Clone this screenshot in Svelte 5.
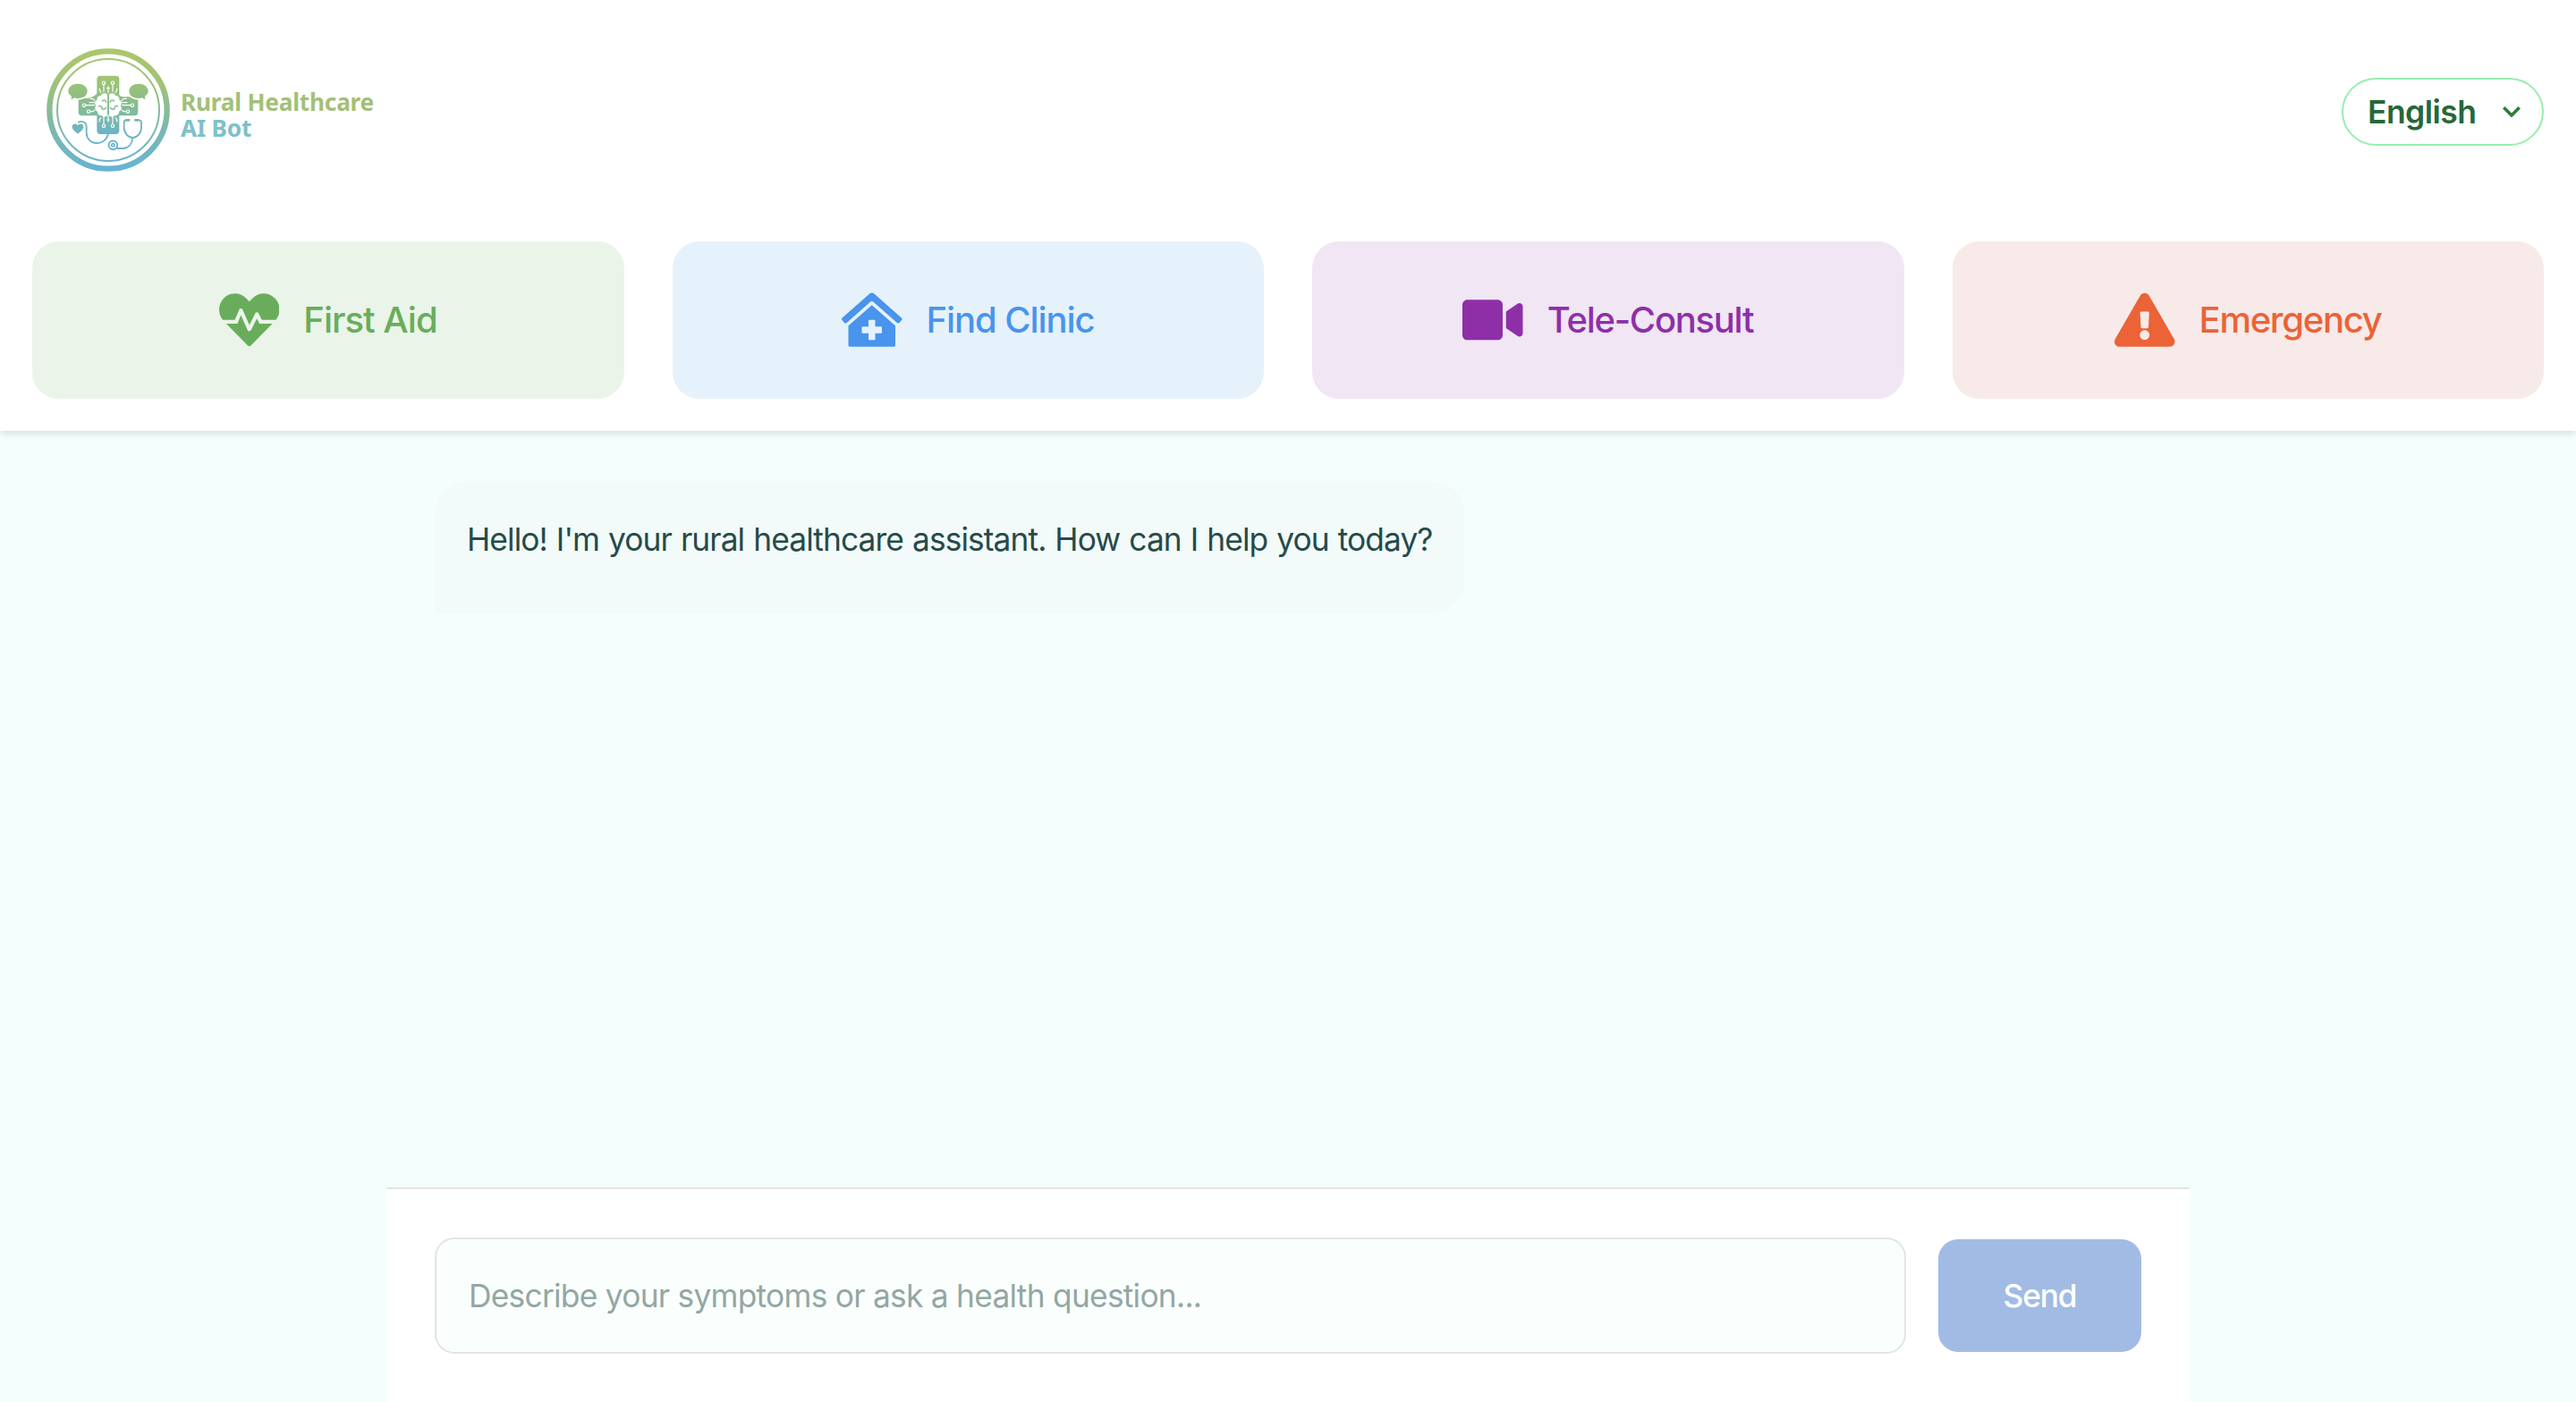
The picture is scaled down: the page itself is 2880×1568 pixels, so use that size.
<script>
  const actions = [
    { id: 'aid', label: 'First Aid', box: '0 0 512 512', path: 'M320.2 243.8l-49.7 99.4c-6 12.1-23.4 11.7-28.9-.6l-56.9-126.3-30 71.7H60.6l182.5 186.5c7.1 7.3 18.6 7.3 25.7 0L451.4 288H342.3l-22.1-44.2zM473.7 73.9l-2.4-2.5c-51.5-52.6-135.8-52.6-187.4 0L256 100l-27.9-28.5c-51.5-52.7-135.9-52.7-187.4 0l-2.4 2.4C-10.4 123.7-12.5 203 31 256h102.4l35.9-86.2c5.4-12.9 23.6-13.2 29.4-.4l58.2 129.3 49-97.9c5.9-11.8 22.7-11.8 28.6 0l27.6 55.2H481c43.5-53 41.4-132.3-7.3-182.1z' },
    { id: 'clinic', label: 'Find Clinic', box: '0 0 576 512', path: 'M288 115L69.47 307.71c-1.62 1.46-3.69 2.14-5.47 3.35V496a16 16 0 0 0 16 16h416a16 16 0 0 0 16-16V311.1c-1.7-1.16-3.72-1.82-5.26-3.2zm96 261a8 8 0 0 1-8 8h-56v56a8 8 0 0 1-8 8h-48a8 8 0 0 1-8-8v-56h-56a8 8 0 0 1-8-8v-48a8 8 0 0 1 8-8h56v-56a8 8 0 0 1 8-8h48a8 8 0 0 1 8 8v56h56a8 8 0 0 1 8 8zm186.69-139.72l-255.94-226a39.85 39.85 0 0 0-53.45 0l-256 226a16 16 0 0 0-1.21 22.6L25.5 282.7a16 16 0 0 0 22.6 1.21L277.42 81.63a16 16 0 0 1 21.17 0L527.91 283.9a16 16 0 0 0 22.6-1.21l21.4-23.82a16 16 0 0 0-1.22-22.59z' },
    { id: 'tele', label: 'Tele-Consult', box: '0 0 576 512', path: 'M336.2 64H47.8C21.4 64 0 85.4 0 111.8v288.4C0 426.6 21.4 448 47.8 448h288.4c26.4 0 47.8-21.4 47.8-47.8V111.8c0-26.4-21.4-47.8-47.8-47.8zm189.4 37.7L416 177.3v157.4l109.6 75.5c21.2 14.6 50.4-.3 50.4-25.8V127.5c0-25.4-29.1-40.4-50.4-25.8z' },
    { id: 'sos', label: 'Emergency', box: '0 0 576 512', path: 'M569.517 440.013C587.975 472.007 564.806 512 527.94 512H48.054c-36.937 0-59.999-40.055-41.577-71.987L246.423 23.985c18.467-32.009 64.72-31.951 83.154 0l239.94 416.028zM288 354c-25.405 0-46 20.595-46 46s20.595 46 46 46 46-20.595 46-46-20.595-46-46-46zm-43.673-165.346l7.418 136c.347 6.364 5.609 11.346 11.982 11.346h48.546c6.373 0 11.635-4.982 11.982-11.346l7.418-136c.375-6.874-5.098-12.654-11.982-12.654h-63.383c-6.884 0-12.356 5.78-11.981 12.654z' }
  ];
</script>

<div class="page">
  <header>
    <div class="top">
      <div class="brand">
        <svg class="logo" viewBox="33 39 420 420" fill="none" stroke="url(#inner)" stroke-linecap="round" stroke-linejoin="round">
          <defs>
            <linearGradient id="ring" gradientUnits="userSpaceOnUse" x1="0" y1="45" x2="0" y2="455">
              <stop offset="0" stop-color="#acc76b" />
              <stop offset=".3" stop-color="#9cc27a" />
              <stop offset=".6" stop-color="#7fb9a6" />
              <stop offset="1" stop-color="#66b3d6" />
            </linearGradient>
            <linearGradient id="inner" gradientUnits="userSpaceOnUse" x1="0" y1="134" x2="0" y2="380">
              <stop offset="0" stop-color="#a3c670" />
              <stop offset=".28" stop-color="#8fbe82" />
              <stop offset=".52" stop-color="#7ebaa0" />
              <stop offset=".78" stop-color="#6cb4c8" />
              <stop offset="1" stop-color="#68b2d2" />
            </linearGradient>
          </defs>
          <circle cx="243" cy="249" r="197" stroke="url(#ring)" stroke-width="19" />
          <circle cx="243" cy="249" r="171" stroke="url(#ring)" stroke-width="6" />
          <path fill="url(#inner)" stroke="none" d="M217 134h51q12 0 12 12v53q5 6 12 6h39q12 0 12 12v39q0 12-12 12h-51v50q0 12-12 12h-51q-12 0-12-12v-50h-50q-12 0-12-12v-39q0-6 6-8 38 4 56-15v-48q0-12 12-12z" />
          <g fill="url(#inner)" stroke="#fff" stroke-width="10" paint-order="stroke">
            <path d="M141 161c18 0 32 10 32 25s-14 24-32 24c-5 0-8 0-12-2-3 3-7 5-11 6 2-4 2-8 1-12-6-4-10-9-10-16 0-15 14-25 32-25z" />
            <path d="M345 161c-18 0-32 10-32 25s14 24 32 24c5 0 8 0 12-2 3 3 7 5 11 6-2-4-2-8-1-12 6-4 10-9 10-16 0-15-14-25-32-25z" />
          </g>
          <path fill="url(#inner)" stroke="none" d="M141 329c-12-10-19-16-19-24 0-11 14-13 19-4 5-9 19-7 19 4 0 8-7 14-19 24z" />
          <g fill="#fff" stroke="none">
            <path d="M240 197c-8-7-19-4-22 4-9 0-14 7-12 14-9 4-10 14-4 19-6 7-3 17 5 20-1 9 7 15 14 13 5 7 15 6 19 1z" />
            <path d="M246 197c8-7 19-4 22 4 9 0 14 7 12 14 9 4 10 14 4 19 6 7 3 17-5 20 1 9-7 15-14 13-5 7-15 6-19 1z" />
          </g>
          <g stroke="#fff" stroke-width="3.5">
            <circle cx="228" cy="158" r="5" /><circle cx="258" cy="158" r="5" />
            <path d="M228 164v23M258 164v23M243 170v22M214 177v6l5 7M272 177v6l-5 7M228 295v-24M258 295v-24M243 288v-22M214 288v-7l5-6M272 288v-7l-5-6M239 176h8M239 282h8" />
            <circle cx="228" cy="302" r="5" /><circle cx="258" cy="302" r="5" />
            <circle cx="162" cy="233" r="5" /><circle cx="177" cy="254" r="5" />
            <path d="M168 233h28M183 254h8l7-5M182 211h9l7 6M180 224h16" />
            <circle cx="324" cy="233" r="5" /><circle cx="309" cy="254" r="5" />
            <path d="M318 233h-28M303 254h-8l-7-5M304 211h-9l-7 6M306 224h-16" />
          </g>
          <g stroke-width="4.5">
            <path d="M223 219c6-6 13-2 13 4M211 237c6-4 13 2 11 8M222 245c5 4 11 0 14-4M263 219c-6-6-13-2-13 4M275 237c-6-4-13 2-11 8M264 245c-5 4-11 0-14-4" />
          </g>
          <g stroke-width="5.5">
            <path d="M143 290c12-6 27 0 27 15v20c0 20 14 35 34 35 22 0 36-14 39-33M303 283c-5 0-7 3-7 8v16c0 20 14 35 29 35s29-15 29-35v-16c0-5-3-8-8-8M325 342c-2 21-14 36-34 36h-17" />
            <path stroke-width="8" d="M304 283h9M334 283h9" />
            <circle cx="259" cy="367" r="14.5" stroke-width="6" />
            <circle cx="259" cy="367" r="5" stroke-width="5" />
          </g>
        </svg>
        <div class="name"><span class="n1">Rural Healthcare</span><span class="n2">AI Bot</span></div>
      </div>
      <button class="lang"><span>English</span>
        <svg viewBox="0 0 20 12" fill="none" stroke="currentColor" stroke-width="3.6"><path d="M1.3 1.3L10 10l8.7-8.7" /></svg>
      </button>
    </div>
    <nav>
      {#each actions as a}
        <button class="card {a.id}"><svg viewBox={a.box}><path d={a.path} /></svg><span>{a.label}</span></button>
      {/each}
    </nav>
  </header>
  <main>
    <div class="chat">
      <div class="bubble"><p>Hello! I'm your rural healthcare assistant. How can I help you today?</p></div>
    </div>
    <form class="composer">
      <input type="text" placeholder="Describe your symptoms or ask a health question..." />
      <button class="send" type="button">Send</button>
    </form>
  </main>
</div>

<style>
  :global(body) { margin: 0; }
  .page, .page * { box-sizing: border-box; }
  .page { width: 100%; height: 1568px; display: flex; flex-direction: column; overflow: hidden; background: #f4fefd; font-family: Inter, "Liberation Sans", sans-serif; font-size: 35.3px; }
  button, input { font: inherit; margin: 0; padding: 0; border: 0; }
  header { height: 482px; flex: none; background: #fff; padding: 0 36px 36px; display: flex; flex-direction: column; justify-content: space-between; box-shadow: 0 2px 8px rgba(0, 0, 0, .15); position: relative; }
  .top { height: 250px; display: flex; justify-content: space-between; align-items: center; padding-left: 15px; }
  .brand { display: flex; align-items: center; gap: 11px; padding-bottom: 4px; }
  .logo { width: 140px; height: 140px; }
  .name { display: flex; flex-direction: column; padding-top: 12px; font-family: "Noto Sans", sans-serif; font-weight: 700; font-size: 26.2px; line-height: 29px; letter-spacing: -.2px; }
  .n1 { color: #a2c077; }
  .n2 { color: #7cc1c9; }
  .lang { width: 226px; height: 76px; border: 2px solid #97edb0; border-radius: 38px; background: #fff; color: #276738; font-weight: 600; font-size: 35.5px; letter-spacing: -.55px; display: flex; align-items: center; justify-content: space-between; padding: 0 24px 0 27px; }
  .lang svg { width: 20px; height: 12px; color: #2a7f3c; }
  nav { display: grid; grid-template-columns: repeat(4, 1fr); gap: 54px; }
  .card { height: 176px; border-radius: 30px; display: flex; align-items: center; justify-content: center; gap: 27px; font-size: 40px; font-weight: 500; }
  .card svg { width: 67.5px; height: 67.5px; fill: currentColor; }
  .card span { padding-bottom: 1px; }
  .aid { background: #eaf4e9; color: #69ad5c; letter-spacing: -1px; }
  .clinic { background: #e5f2fc; color: #4994ec; letter-spacing: -1.09px; }
  .tele { background: #f0e6f4; color: #8e2fa8; letter-spacing: -1.3px; }
  .sos { background: #f7eae9; color: #eb6337; letter-spacing: -1.3px; }
  main { flex: 1; width: 2016px; margin: 0 auto; display: flex; flex-direction: column; min-height: 0; }
  .chat { flex: 1; padding: 56px 54px 0; min-height: 0; }
  .bubble { width: 1151px; height: 148px; padding: 37px 36px; background: #f2fafa; border-radius: 36px 36px 36px 4px; color: #274a47; }
  .bubble p { margin: 0; line-height: 58px; white-space: nowrap; letter-spacing: -.89px; word-spacing: .9px; }
  .composer { height: 240px; flex: none; background: #fff; border-top: 2px solid #e1e5e4; padding: 54px; display: flex; align-items: center; gap: 36px; }
  input { flex: 1; height: 130px; border: 2px solid #e1e5e4; border-radius: 22px; background: #fafffe; padding: 0 36px; outline: none; letter-spacing: -.73px; }
  input::placeholder { color: #93a7a3; opacity: 1; }
  .send { width: 227px; height: 126px; border-radius: 22px; background: #a1bbe5; color: #fff; font-weight: 500; letter-spacing: -1.2px; }
</style>
